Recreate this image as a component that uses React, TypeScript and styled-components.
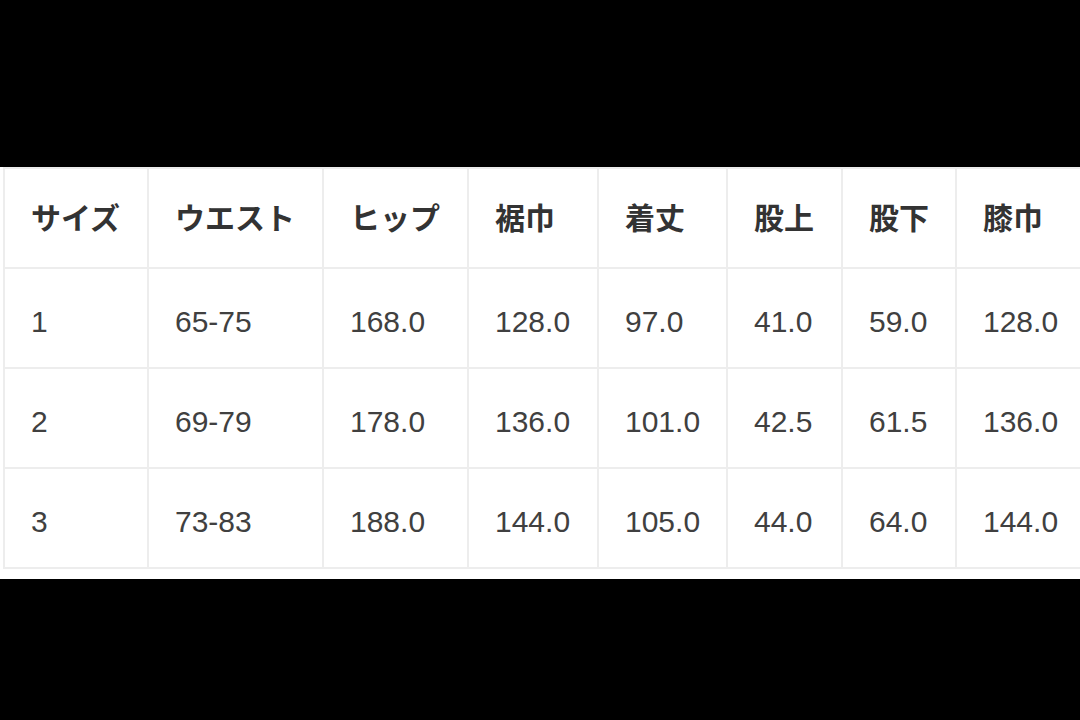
import React from 'react';
import styled, { createGlobalStyle } from 'styled-components';

const GlobalStyle = createGlobalStyle`
  html, body {
    margin: 0;
    padding: 0;
    background: #000;
  }
  body {
    font-family: "Liberation Sans", Arial, "Noto Sans CJK JP", sans-serif;
  }
`;

const columns = [
  { label: 'サイズ', width: 144 },
  { label: 'ウエスト', width: 175 },
  { label: 'ヒップ', width: 145 },
  { label: '裾巾', width: 130 },
  { label: '着丈', width: 129 },
  { label: '股上', width: 115 },
  { label: '股下', width: 114 },
  { label: '膝巾', width: 133 },
];

const rows = [
  ['1', '65-75', '168.0', '128.0', '97.0', '41.0', '59.0', '128.0'],
  ['2', '69-79', '178.0', '136.0', '101.0', '42.5', '61.5', '136.0'],
  ['3', '73-83', '188.0', '144.0', '105.0', '44.0', '64.0', '144.0'],
];

const App = () => {
  return (
    <>
      <GlobalStyle />
      <Page>
        <Panel>
          <SizeTable>
            <colgroup>
              {columns.map((col) => (
                <col key={col.label} style={{ width: col.width }} />
              ))}
            </colgroup>
            <thead>
              <tr>
                {columns.map((col) => (
                  <HeadCell key={col.label}>{col.label}</HeadCell>
                ))}
              </tr>
            </thead>
            <tbody>
              {rows.map((row) => (
                <tr key={row[0]}>
                  {row.map((value, i) => (
                    <Cell key={i}>{value}</Cell>
                  ))}
                </tr>
              ))}
            </tbody>
          </SizeTable>
        </Panel>
      </Page>
    </>
  );
};

const Page = styled.div`
  width: 1080px;
  height: 720px;
  padding-top: 167px;
  box-sizing: border-box;
  background: #000;
  overflow: hidden;
`;

const Panel = styled.div`
  background: #fff;
  padding: 0 0 10px 3px;
  overflow: hidden;
`;

const SizeTable = styled.table`
  table-layout: fixed;
  width: 1085px;
  border-collapse: separate;
  border-spacing: 0;
  border-top: 2px solid #ededed;
  border-left: 2px solid #ededed;
`;

const BaseCell = styled.td`
  box-sizing: border-box;
  height: 100px;
  padding: 0 0 0 26px;
  text-align: left;
  vertical-align: middle;
  border-right: 2px solid #ededed;
  border-bottom: 2px solid #ededed;
  white-space: nowrap;
`;

const HeadCell = styled(BaseCell).attrs({ as: 'th' })`
  padding-bottom: 4px;
  font-family: "Noto Sans CJK JP", "Noto Sans", sans-serif;
  font-size: 30px;
  font-weight: 700;
  color: #333;
`;

const Cell = styled(BaseCell)`
  padding-top: 7px;
  font-family: "Liberation Sans", Arial, sans-serif;
  font-size: 30px;
  font-weight: 400;
  color: #404040;
`;

export default App;
